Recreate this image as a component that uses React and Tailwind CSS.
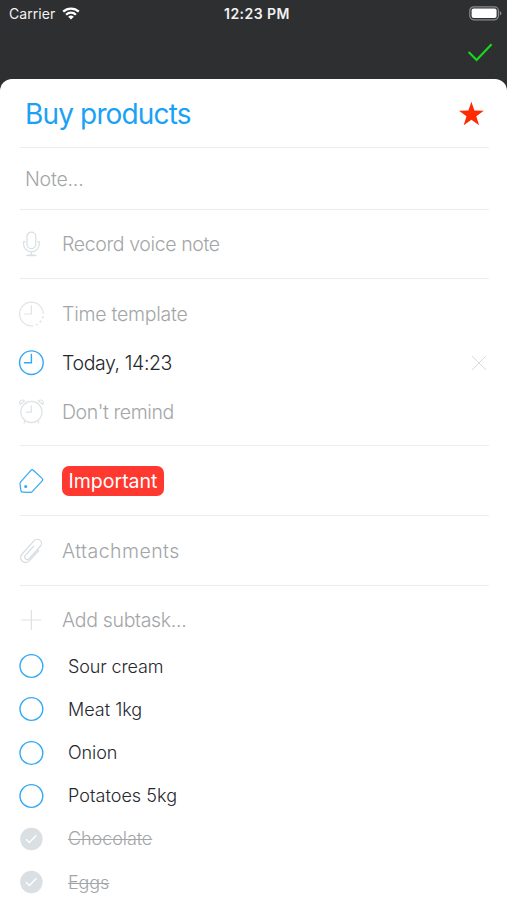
import React, { useState } from 'react';

const initialSubtasks = [
  { id: 1, title: 'Sour cream', done: false, spacing: 'tracking-[-0.14px]' },
  { id: 2, title: 'Meat 1kg', done: false, spacing: 'tracking-[0px]' },
  { id: 3, title: 'Onion', done: false, spacing: 'tracking-[-0.1px]' },
  { id: 4, title: 'Potatoes 5kg', done: false, spacing: 'tracking-[0.04px]' },
  { id: 5, title: 'Chocolate', done: true, spacing: 'tracking-[-0.07px]' },
  { id: 6, title: 'Eggs', done: true, spacing: 'tracking-[-0.1px]' }
];

const Icon = ({ className = '', children }) => (
  <svg
    viewBox="0 0 26 26"
    className={['h-[26px] w-[26px] shrink-0', className].join(' ')}
    fill="none"
    stroke="currentColor"
    strokeWidth="1.2"
    aria-hidden="true"
  >
    {children}
  </svg>
);

const MicIcon = () => (
  <Icon className="text-[#d9dee2]">
    <rect x="9" y="1.2" width="8.8" height="16.4" rx="4.4" />
    <path
      d="M7 10.6H5.6v2.7a7.8 7.6 0 0 0 15.6 0v-2.7h-1.4M13.4 20.9v3.3M8.8 24.6q4.6-1.6 9.2 0z"
      strokeLinecap="round"
      strokeLinejoin="round"
    />
  </Icon>
);

const TemplateIcon = () => (
  <Icon className="text-[#dfe3e6]">
    <path d="M13.4 24.8A11.8 11.8 0 1 1 25.2 13" />
    <path d="M25.2 13A11.8 11.8 0 0 1 13.4 24.8" strokeWidth="1.6" strokeDasharray="2 2.8" strokeDashoffset="-2.4" />
    <path d="M13.4 4.5V13H6" />
  </Icon>
);

const ClockIcon = () => (
  <Icon className="text-[#32a9f5]">
    <circle cx="13.4" cy="12.7" r="11.8" strokeWidth="1.4" />
    <path d="M13.4 3.8v9H5.9" strokeWidth="1.4" />
  </Icon>
);

const AlarmIcon = () => (
  <Icon className="text-[#dfe3e6]">
    <circle cx="13.4" cy="13" r="10.6" />
    <path d="M13.4 6.6v6.6H8M6.9 22.1l-1 2.4M19.9 22.1l1 2.4" />
    <path d="M2.2 5.4A2.4 2.4 0 0 1 6.4 2zM24.6 5.4A2.4 2.4 0 0 0 20.4 2z" strokeLinejoin="round" />
  </Icon>
);

const TagIcon = () => (
  <Icon className="text-[#32a9f5]">
    <path
      d="M2.5 14.2 13.1 2.2a1.6 1.6 0 0 1 2.2 0l9 8.4a1.4 1.4 0 0 1 .1 2L14.2 23.7a2 2 0 0 1-1.6.7l-8-.3a1.8 1.8 0 0 1-1.7-1.5L2 15.8a2 2 0 0 1 .5-1.6Z"
      strokeLinejoin="round"
    />
    <circle cx="7.7" cy="18.4" r="1.5" fill="currentColor" stroke="none" />
  </Icon>
);

const ClipIcon = () => (
  <Icon className="text-[#d7dce0]">
    <path
      d="M18.4 7.5v14a5 5 0 0 1-10 0V3.2a4.2 4.2 0 0 1 8.4 0V20a2.5 2.5 0 0 1-5 0V7.5"
      transform="rotate(42 13 13)"
      strokeLinecap="round"
    />
  </Icon>
);

const PlusIcon = () => (
  <Icon className="text-[#dde1e3]">
    <path d="M13.4 3v20M3.4 13h20" />
  </Icon>
);

const StatusBar = () => (
  <div className="grid h-[27px] grid-cols-3 items-center pr-[5px] pl-[9px] text-[14px] text-[#f2f2f2]">
    <div className="flex items-center gap-[7px]">
      <span className="tracking-[0.05px]">Carrier</span>
      <svg viewBox="0 0 18 13" className="h-[13px] w-[18px]" fill="none" stroke="white" strokeWidth="2.3" aria-hidden="true">
        <path d="M1.2 4.7a11.2 11.2 0 0 1 15.6 0M4.1 7.7a7 7 0 0 1 9.8 0" />
        <path d="M9 12.6 6.2 9.8a4 4 0 0 1 5.6 0z" fill="white" stroke="none" />
      </svg>
    </div>
    <span className="pl-[3px] text-center font-semibold tracking-[0.45px] whitespace-nowrap">12:23 PM</span>
    <svg viewBox="0 0 33 15" className="h-[15px] w-[33px] justify-self-end" fill="none" aria-hidden="true">
      <rect x=".8" y=".8" width="28.6" height="13" rx="4" stroke="#8b8b8c" strokeWidth="1.2" />
      <rect x="2.6" y="2.5" width="25" height="9.6" rx="2" fill="white" />
      <path d="M30.8 5v4.6q1.5-.6 1.5-2.3T30.8 5Z" fill="#8b8b8c" />
    </svg>
  </div>
);

const Row = ({ icon, children, className = '' }) => (
  <div className={['flex items-center gap-[18px] text-[#a3a6a8]', className].join(' ')}>
    <span className="-ml-[2px] flex">{icon}</span>
    {children}
  </div>
);

const Subtask = ({ task, onToggle }) => (
  <li className="flex h-[43.2px] items-center">
    <button onClick={() => onToggle(task.id)} className="-ml-[2px] flex" aria-pressed={task.done} aria-label={task.title}>
      {task.done ? (
        <Icon>
          <circle cx="13.4" cy="13" r="11.2" fill="#d9dfe2" stroke="none" />
          <path d="m8 13.3 3.4 3.2 7-7.2" stroke="white" strokeWidth="1.5" />
        </Icon>
      ) : (
        <Icon className="text-[#32a9f5]">
          <circle cx="13.4" cy="13" r="11.4" strokeWidth="1.4" />
        </Icon>
      )}
    </button>
    <span
      className={[
        'ml-6 text-[18px] font-light',
        task.spacing,
        task.done ? 'text-[#a3a6a8] line-through decoration-1' : 'text-[#26282e]'
      ].join(' ')}
    >
      {task.title}
    </span>
  </li>
);

const App = () => {
  const [subtasks, setSubtasks] = useState(initialSubtasks);

  const toggle = (id) => {
    setSubtasks((list) => list.map((t) => (t.id === id ? { ...t, done: !t.done } : t)));
  };

  return (
    <div className="flex h-[900px] w-[507px] flex-col overflow-hidden bg-[#2e2f31] font-['Inter',sans-serif]">
      <header className="h-[79px] shrink-0">
        <StatusBar />
        <div className="flex h-[52px] items-center justify-end pr-[14px]">
          <button aria-label="Save" className="flex">
            <svg viewBox="0 0 26 20" className="h-5 w-[26px]" fill="none" stroke="#14dc19" strokeWidth="2.2" aria-hidden="true">
              <path d="m1.6 9 8 8L24.6 1.2" />
            </svg>
          </button>
        </div>
      </header>

      <main className="grow rounded-t-[12px] bg-white pr-[18px] pl-5 text-[19.5px] font-light">
        <section className="flex h-[69px] items-center justify-between border-b border-[#ebecec] pr-[5px] pl-[5px]">
          <h1 className="pt-[2px] text-[28px] font-normal tracking-[-0.85px] text-[#1ba1f5]">Buy products</h1>
          <svg viewBox="0 0 26 26" className="mt-px h-[26px] w-[26px]" fill="#ff2a00" aria-hidden="true">
            <path d="m13.4.8 3 8.8 9.4.1-7.5 5.6 2.8 9-7.7-5.5-7.7 5.5 2.8-9L1 9.7l9.4-.1z" />
          </svg>
        </section>

        <section className="flex h-[62px] items-center border-b border-[#ebecec] pl-[5px] text-[#a3a6a8]">
          <span className="pt-[2px] tracking-[-0.2px]">Note...</span>
        </section>

        <section className="border-b border-[#ebecec]">
          <Row icon={<MicIcon />} className="h-[68px]">
            <span className="pt-[2px] tracking-[-0.37px]">Record voice note</span>
          </Row>
        </section>

        <section className="h-[167px] border-b border-[#ebecec] pt-[10px]">
          <Row icon={<TemplateIcon />} className="h-[49px]">
            <span className="pt-[2px] tracking-[-0.25px]">Time template</span>
          </Row>
          <Row icon={<ClockIcon />} className="h-[49px]">
            <span className="grow pt-[2px] tracking-[-0.4px] text-[#25272d]">Today, 14:23</span>
            <button aria-label="Clear time" className="mr-[2px] flex">
              <svg viewBox="0 0 16 16" className="h-4 w-4" stroke="#d8dbdd" strokeWidth="1" aria-hidden="true">
                <path d="m1 1 14 14M15 1 1 15" />
              </svg>
            </button>
          </Row>
          <Row icon={<AlarmIcon />} className="h-[49px]">
            <span className="pt-[2px] tracking-[-0.42px]">Don't remind</span>
          </Row>
        </section>

        <section className="border-b border-[#ebecec]">
          <Row icon={<TagIcon />} className="h-[69px]">
            <span className="flex h-[30px] w-[102px] items-center justify-center rounded-[7px] bg-[#ff3830] pt-[2px] font-normal text-white">
              Important
            </span>
          </Row>
        </section>

        <section className="border-b border-[#ebecec]">
          <Row icon={<ClipIcon />} className="h-[69px]">
            <span className="pt-[2px] tracking-[0.45px]">Attachments</span>
          </Row>
        </section>

        <section className="pt-[10px]">
          <Row icon={<PlusIcon />} className="h-[48.6px]">
            <span className="pt-px tracking-[-0.32px]">Add subtask...</span>
          </Row>
          <ul>
            {subtasks.map((task) => (
              <Subtask key={task.id} task={task} onToggle={toggle} />
            ))}
          </ul>
        </section>
      </main>
    </div>
  );
};

export default App;
